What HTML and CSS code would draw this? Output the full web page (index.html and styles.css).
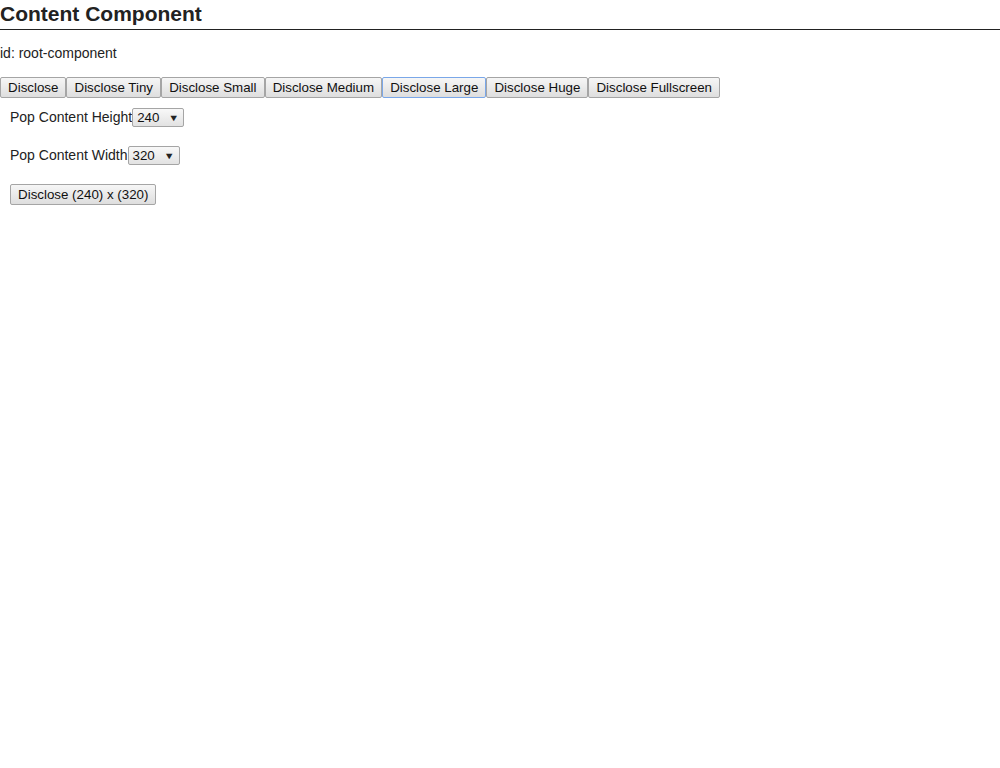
FILE: index.html
```html
<!DOCTYPE html>
<html>
<head>
<meta charset="utf-8">
<link rel="stylesheet" href="styles.css">
</head>
<body>
<h1 class="title">Content Component</h1>
<p class="id-line">id: root-component</p>
<div class="btn-row">
  <button class="btn">Disclose</button>
  <button class="btn">Disclose Tiny</button>
  <button class="btn">Disclose Small</button>
  <button class="btn">Disclose Medium</button>
  <button class="btn btn-focus">Disclose Large</button>
  <button class="btn">Disclose Huge</button>
  <button class="btn">Disclose Fullscreen</button>
</div>
<div class="controls">
  <div class="field">
    <span class="label">Pop Content Height</span><span class="select">240<span class="arrow">▼</span></span>
  </div>
  <div class="field">
    <span class="label">Pop Content Width</span><span class="select">320<span class="arrow">▼</span></span>
  </div>
  <div class="field field-btn">
    <button class="btn">Disclose (240) x (320)</button>
  </div>
</div>
</body>
</html>
```

FILE: styles.css
```css
html, body {
  margin: 0;
  padding: 0;
  background: #fff;
}
body {
  font-family: "Liberation Sans", Arial, sans-serif;
  color: #222;
  font-size: 14px;
}
.title {
  margin: 0;
  font-size: 21px;
  font-weight: bold;
  line-height: 27px;
  height: 27px;
  padding-bottom: 2px;
  border-bottom: 1px solid #222;
  color: #222;
}
.id-line {
  margin: 14px 0 0 0;
  line-height: 18px;
  font-size: 14px;
}
.btn-row {
  display: flex;
  margin-top: 15px;
}
.btn {
  font-family: "Liberation Sans", Arial, sans-serif;
  font-size: 13.3333px;
  color: #111;
  height: 21px;
  padding: 0 7.06px;
  margin: 0;
  border: 1px solid #a5a5a5;
  border-radius: 2px;
  background: linear-gradient(#f6f6f6, #dedede);
  line-height: 19px;
  box-sizing: border-box;
  white-space: nowrap;
}
.btn-focus {
  border-color: #7aa7e8;
}
.controls {
  padding-left: 10px;
}
.field {
  display: flex;
  align-items: center;
  margin-top: 10px;
  height: 19px;
}
.field + .field {
  margin-top: 19px;
}
.field-btn {
  height: 21px;
  margin-top: 0;
}
.field + .field-btn {
  margin-top: 19px;
}
.label {
  font-size: 14px;
  line-height: 19px;
}
.select {
  display: inline-flex;
  align-items: center;
  justify-content: space-between;
  width: 52px;
  height: 19px;
  box-sizing: border-box;
  border: 1px solid #a5a5a5;
  border-radius: 2px;
  background: linear-gradient(#f8f8f8, #e2e2e2);
  font-size: 13.3333px;
  padding: 0 4px 0 4px;
  color: #111;
}
.arrow {
  font-size: 11px;
  color: #222;
  transform: scaleY(0.85);
}
```
